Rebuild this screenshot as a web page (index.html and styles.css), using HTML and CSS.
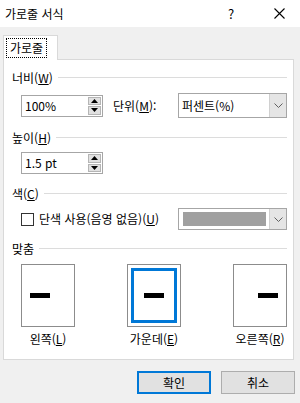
FILE: index.html
```html
<!DOCTYPE html>
<html lang="ko">
<head>
    <meta charset="UTF-8">
    <title>가로줄 서식</title>
    <link rel="stylesheet" href="styles.css">
</head>
<body>
    <div class="titlebar">
        <span class="title">가로줄 서식</span>
        <span class="help">?</span>
        <span class="close">
            <svg width="11" height="11" viewBox="0 0 11 11"><path d="M0.5 0.5 L10.5 10.5 M10.5 0.5 L0.5 10.5" stroke="#000" stroke-width="1.1" fill="none"/></svg>
        </span>
    </div>

    <div class="dialog">
        <div class="tabs">
            <div class="tab"><span class="tab-label">가로줄</span></div>
        </div>

        <div class="panel">
            <div class="group-head"><span>너비(<u>W</u>)</span><div class="rule"></div></div>
            <div class="row row-width">
                <div class="spin">
                    <span class="spin-value">100%</span>
                    <div class="spin-btns">
                        <div class="spin-btn"><svg width="7" height="4" viewBox="0 0 7 4"><path d="M0 4 L3.5 0 L7 4 Z" fill="#000"/></svg></div>
                        <div class="spin-btn"><svg width="7" height="4" viewBox="0 0 7 4"><path d="M0 0 L3.5 4 L7 0 Z" fill="#000"/></svg></div>
                    </div>
                </div>
                <span class="unit-label">단위(<u>M</u>):</span>
                <div class="select">
                    <span class="select-value">퍼센트(%)</span>
                    <div class="select-btn"><svg width="9" height="5" viewBox="0 0 9 5"><path d="M0.5 0.5 L4.5 4.5 L8.5 0.5" stroke="#606060" fill="none"/></svg></div>
                </div>
            </div>

            <div class="group-head head-height"><span>높이(<u>H</u>)</span><div class="rule"></div></div>
            <div class="row row-height">
                <div class="spin">
                    <span class="spin-value">1.5 pt</span>
                    <div class="spin-btns">
                        <div class="spin-btn"><svg width="7" height="4" viewBox="0 0 7 4"><path d="M0 4 L3.5 0 L7 4 Z" fill="#000"/></svg></div>
                        <div class="spin-btn"><svg width="7" height="4" viewBox="0 0 7 4"><path d="M0 0 L3.5 4 L7 0 Z" fill="#000"/></svg></div>
                    </div>
                </div>
            </div>

            <div class="group-head head-color"><span>색(<u>C</u>)</span><div class="rule"></div></div>
            <div class="row row-color">
                <label class="check"><span class="box"></span><span>단색 사용(음영 없음)(<u>U</u>)</span></label>
                <div class="select">
                    <div class="swatch"></div>
                    <div class="select-btn"><svg width="9" height="5" viewBox="0 0 9 5"><path d="M0.5 0.5 L4.5 4.5 L8.5 0.5" stroke="#606060" fill="none"/></svg></div>
                </div>
            </div>

            <div class="group-head head-align"><span>맞춤</span><div class="rule"></div></div>
            <div class="align-row">
                <div class="align-item">
                    <div class="align-box left"><div class="dash"></div></div>
                    <span class="align-label">왼쪽(<u>L</u>)</span>
                </div>
                <div class="align-item">
                    <div class="align-box selected"><div class="inner"><div class="dash"></div></div></div>
                    <span class="align-label">가운데(<u>E</u>)</span>
                </div>
                <div class="align-item">
                    <div class="align-box right"><div class="dash"></div></div>
                    <span class="align-label">오른쪽(<u>R</u>)</span>
                </div>
            </div>
        </div>

        <div class="buttons">
            <div class="button default">확인</div>
            <div class="button">취소</div>
        </div>
    </div>
</body>
</html>
```

FILE: styles.css
```css
html, body {
    margin: 0;
    padding: 0;
}

body {
    width: 300px;
    height: 403px;
    background: #f0f0f0;
    font-family: "Noto Sans CJK KR", "Noto Sans", sans-serif;
    font-size: 12px;
    line-height: 16px;
    color: #000;
    overflow: hidden;
}

u {
    text-decoration: underline;
    text-underline-offset: 1px;
}

.titlebar {
    height: 27px;
    background: #fff;
    display: flex;
    align-items: center;
    padding-left: 5px;
}

.title {
    flex: 1;
    font-size: 12px;
}

.help {
    width: 12px;
    text-align: center;
    margin-right: 37px;
    font-size: 13px;
}

.close {
    width: 11px;
    height: 11px;
    margin-right: 15px;
    display: flex;
}

.dialog {
    padding: 8px 0 0 3px;
}

.tabs {
    display: flex;
    height: 24px;
    position: relative;
    z-index: 1;
}

.tab {
    width: 55px;
    height: 25px;
    box-sizing: border-box;
    background: #fff;
    border: 1px solid #d9d9d9;
    border-bottom: none;
    display: flex;
    align-items: flex-start;
    padding: 3px 0 0 3px;
}

.tab-label {
    outline: 1px dotted #000;
    padding: 1px 3px;
    line-height: 16px;
}

.panel {
    width: 291px;
    height: 301px;
    box-sizing: border-box;
    background: #fff;
    border: 1px solid #d9d9d9;
    padding: 10px 6px 0 8px;
}

.group-head {
    display: flex;
    align-items: center;
    height: 16px;
}

.group-head .rule {
    flex: 1;
    height: 1px;
    background: #dcdcdc;
    margin-left: 5px;
    margin-top: -2px;
}

.head-height {
    margin-top: 12px;
}

.head-color {
    margin-top: 12px;
}

.head-align {
    margin-top: 11px;
}

.row {
    display: flex;
    align-items: center;
    padding-left: 9px;
}

.row-width {
    margin-top: 7px;
    height: 25px;
}

.row-height {
    margin-top: 6px;
    height: 22px;
}

.row-color {
    margin-top: 6px;
    height: 22px;
}

.spin {
    width: 82px;
    height: 22px;
    box-sizing: border-box;
    border: 1px solid #a6a6a6;
    background: #fff;
    display: flex;
    align-items: center;
    padding: 1px 1px 1px 3px;
}

.spin-value {
    flex: 1;
}

.spin-btns {
    display: flex;
    flex-direction: column;
    gap: 1px;
    height: 18px;
}

.spin-btn {
    width: 13px;
    flex: 1;
    background: #e1e1e1;
    border: 1px solid #b5b5b5;
    box-sizing: border-box;
    display: flex;
    align-items: center;
    justify-content: center;
}

.unit-label {
    margin-left: 10px;
    width: 65px;
}

.select {
    width: 109px;
    height: 25px;
    box-sizing: border-box;
    border: 1px solid #a6a6a6;
    background: #fff;
    display: flex;
    align-items: stretch;
    margin-left: auto;
}

.row-color .select {
    height: 22px;
}

.select-value {
    flex: 1;
    padding-left: 3px;
    display: flex;
    align-items: center;
}

.select-btn {
    width: 16px;
    background: #e5e5e5;
    border-left: 1px solid #d0d0d0;
    display: flex;
    align-items: center;
    justify-content: center;
}

.swatch {
    flex: 1;
    margin: 3px 3px 3px 4px;
    background: #a0a0a0;
}

.check {
    display: flex;
    align-items: center;
    gap: 5px;
}

.check .box {
    width: 13px;
    height: 13px;
    box-sizing: border-box;
    border: 1px solid #333;
    background: #fff;
}

.align-row {
    display: flex;
    justify-content: space-between;
    padding-left: 9px;
    margin-top: 7px;
}

.align-item {
    display: flex;
    flex-direction: column;
    align-items: center;
    width: 54px;
}

.align-box {
    width: 54px;
    height: 63px;
    box-sizing: border-box;
    border: 1px solid #8c8c8c;
    background: #fff;
    display: flex;
    align-items: center;
    justify-content: center;
}

.align-box.left {
    justify-content: flex-start;
    padding-left: 8px;
}

.align-box.right {
    justify-content: flex-end;
    padding-right: 8px;
}

.align-box.selected {
    padding: 3px;
}

.align-box .inner {
    width: 100%;
    height: 100%;
    box-sizing: border-box;
    border: 3px solid #0078d7;
    display: flex;
    align-items: center;
    justify-content: center;
}

.dash {
    width: 20px;
    height: 5px;
    background: #000;
}

.align-label {
    margin-top: 4px;
    white-space: nowrap;
}

.buttons {
    display: flex;
    justify-content: flex-end;
    gap: 10px;
    margin-top: 11px;
    padding-right: 5px;
}

.button {
    width: 74px;
    height: 23px;
    box-sizing: border-box;
    background: #e1e1e1;
    border: 1px solid #adadad;
    display: flex;
    align-items: center;
    justify-content: center;
}

.button.default {
    border: 2px solid #0078d7;
}
```
